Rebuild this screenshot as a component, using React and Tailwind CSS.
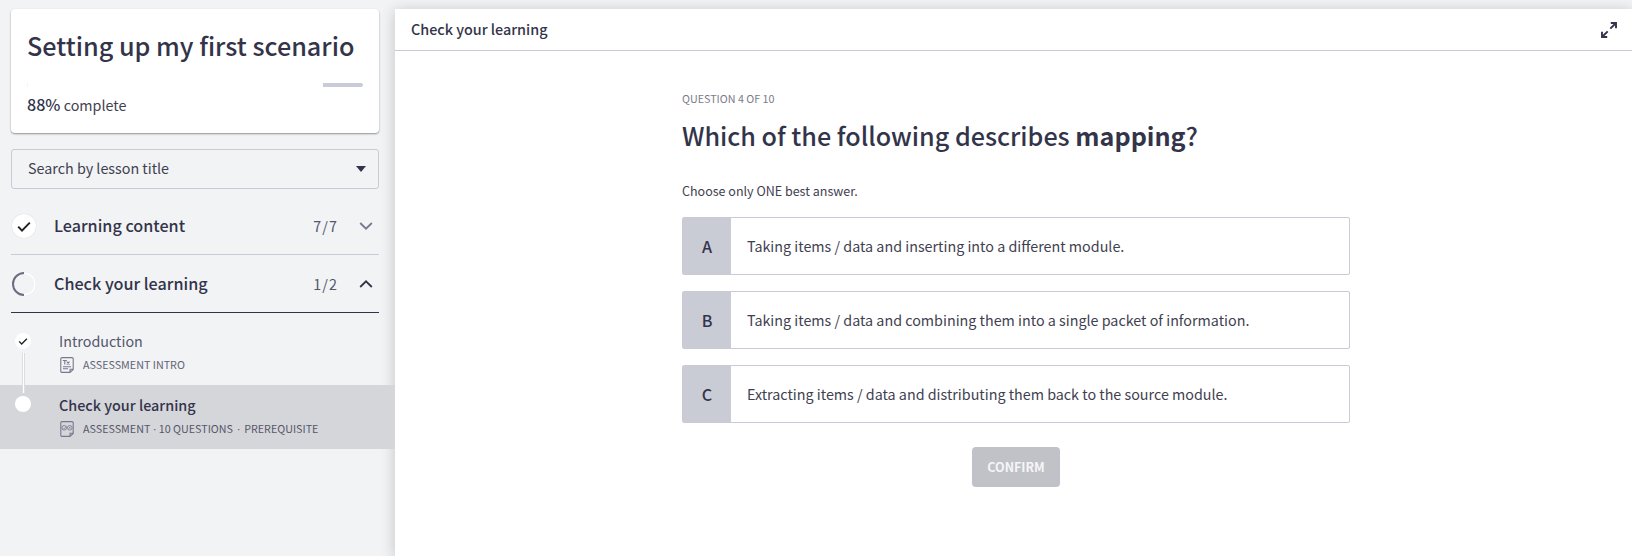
import React from "react";

function Check({ size, className }) {
  return (
    <svg width={size} height={size} viewBox="0 0 24 24" fill="none" stroke="currentColor" strokeWidth="2" className={className}>
      <path d="M6.2 12.6 10 16.6 17.8 8.6" />
    </svg>
  );
}

function Chevron({ up }) {
  return (
    <svg width="14" height="8" viewBox="0 0 14 8" fill="none" stroke={up ? "#33334b" : "#75788f"} strokeWidth="1.8">
      <path d={up ? "M1.2 7 7 1.3 12.8 7" : "M1.2 1 7 6.7 12.8 1"} />
    </svg>
  );
}

function PageIcon({ children }) {
  return (
    <svg width="14" height="16" viewBox="0 0 14 16" fill="none" stroke="#77788d" strokeWidth="1.1">
      <path d="M9.800 15.400H2A1.200 1.200 0 0 1 .8 14.200V1.800A1.200 1.200 0 0 1 2 .6H12A1.200 1.200 0 0 1 13.200 1.800V12.500L10 15.400V12.300H13.200" />
      {children}
    </svg>
  );
}

function Dot() {
  return <span className="font-['Open_Sans',sans-serif]"> · </span>;
}

function Section({ icon, title, count, up }) {
  return (
    <div className={`ml-[11px] mr-4 flex h-[58px] items-center border-b pl-px pr-[6px] ${up ? "border-[#33344c]" : "border-[#c9cad8]"}`}>
      {icon}
      <span className="-mt-0.5 ml-[18px] flex-1 text-[16.16px] font-medium leading-6">{title}</span>
      <span className="mr-[21px] text-[14.32px] leading-6 tracking-[1.1px] text-[#55566b]">{count}</span>
      <Chevron up={up} />
    </div>
  );
}

function Option({ letter, text }) {
  return (
    <div className="flex h-[58px] w-[668px] overflow-hidden rounded-[2px] border border-[#c9cad6]">
      <div className="flex w-12 items-center justify-center bg-[#c9cbd5] text-[16.1px] font-medium">{letter}</div>
      <div className="flex items-center pl-4 text-[14.32px] text-[#3f4150]">{text}</div>
    </div>
  );
}

export default function App() {
  return (
    <div className="flex h-[556px] w-full overflow-hidden bg-[#f1f3f5] font-['Noto_Sans_CJK_SC',sans-serif] text-[#33344a]">
      <aside className="w-[395px] shrink-0 pt-[9px]">
        <div className="ml-[11px] mr-4 h-[124px] rounded-[4px] bg-white px-4 pt-[20px] shadow-[0_1px_2px_rgba(0,0,0,0.4)]">
          <h1 className="h-8 whitespace-nowrap text-[25.2px] font-medium leading-8">Setting up my first scenario</h1>
          <div className="mt-[22px] flex h-1 justify-between">
            <div className="w-px bg-[#f4f4f6]" />
            <div className="w-10 rounded-r-[2px] bg-[#c9cbd7]" />
          </div>
          <p className="mt-[5px] text-[14.32px] leading-6 text-[#3f4150]">
            <span className="text-[16.1px] font-medium text-[#33344a]">88%</span> complete
          </p>
        </div>
        <div className="ml-[11px] mr-4 mt-4 flex h-10 items-center justify-between rounded-[3px] border border-[#c9cad6] pl-4 pr-3 text-[14.32px] text-[#3f4150]">
          <span className="-mt-0.5">Search by lesson title</span>
          <svg width="10" height="6" viewBox="0 0 10 6" fill="#33344c"><path d="M0 0h10L5 6z" /></svg>
        </div>
        <div className="h-2" />
        <Section
          title="Learning content"
          count="7/7"
          icon={<span className="flex size-6 items-center justify-center rounded-full bg-white shadow-[0_0_1px_rgba(0,0,0,0.2)]"><Check size={24} className="text-[#222]" /></span>}
        />
        <Section
          up
          title="Check your learning"
          count="1/2"
          icon={
            <svg width="24" height="24" viewBox="0 0 24 24" fill="none" strokeWidth="2">
              <circle cx="12" cy="12" r="11.500" stroke="#dcdde2" strokeWidth="1" />
              <circle cx="12" cy="12" r="11" stroke="#fff" strokeWidth="1.600" />
              <path d="M12 1a11 11 0 0 0 0 22" stroke="#6b6c83" />
            </svg>
          }
        />
        <div className="relative pt-2">
          <div className="absolute left-[22px] top-[40px] z-10 h-10 w-[3px] border-x border-[#dcdde1] bg-white" />
          <div className="flex h-16 pl-[15px] pt-2">
            <span className="mt-[4px] flex size-4 items-center justify-center rounded-full bg-white"><Check size={16} className="text-[#222]" /></span>
            <div className="ml-7">
              <div className="text-[14.32px] leading-6 text-[#55566b]">Introduction</div>
              <div className="flex h-6 items-center gap-[9px] pl-px text-[10.74px] text-[#626377]">
                <PageIcon>
                  <path d="M2.800 3.500h4M4.800 3.500v4M6.800 4.700l2.700 2.900M9.500 4.700 6.800 7.600M3 9.700h8M3 11.700h5" />
                </PageIcon>
                ASSESSMENT INTRO
              </div>
            </div>
          </div>
          <div className="flex h-16 bg-[#d5d6da] pl-[15px] pt-2">
            <span className="mt-[3px] size-4 rounded-full bg-white" />
            <div className="ml-7">
              <div className="text-[14.38px] font-medium leading-6">Check your learning</div>
              <div className="flex h-6 items-center gap-[9px] pl-px text-[10.74px] text-[#55566b]">
                <PageIcon>
                  <circle cx="4.200" cy="6.800" r="2.300" strokeWidth=".9" />
                  <circle cx="9.800" cy="6.800" r="2.300" strokeWidth=".9" />
                  <path d="m3.200 6.800 1 1 1.600-2M9 6l1.500 1.500M10.500 6 9 7.500" strokeWidth=".7" />
                </PageIcon>
                <span>ASSESSMENT<Dot />10 QUESTIONS<span className="mx-[1.4px]"><Dot /></span>PREREQUISITE</span>
              </div>
            </div>
          </div>
        </div>
      </aside>
      <main className="mt-[9px] flex flex-1 flex-col bg-white shadow-[0_2px_14px_rgba(0,0,0,0.2)]">
        <header className="flex h-[42px] items-center justify-between border-b border-[#c9cad6] pl-4 pr-[15px]">
          <h2 className="-mt-0.5 text-[14.36px] font-medium">Check your learning</h2>
          <svg width="16" height="16" viewBox="0 0 16 16" fill="none" stroke="#33344c" strokeWidth="1.900">
            <path d="M9.300 6.700 14.500 1.500M9.800 1h5.200v5.200M6.700 9.300 1.500 14.500M1 9.800v5.200h5.200" />
          </svg>
        </header>
        <div className="ml-[287px] w-[668px] pt-[38px]">
          <p className="h-5 text-[10.74px] leading-5 text-[#7a7b88]">QUESTION 4 OF 10</p>
          <h3 className="mt-[10px] h-8 whitespace-nowrap text-[25.15px] font-medium leading-8">
            Which of the following describes <b className="font-bold">mapping</b>?
          </h3>
          <p className="mt-[30px] h-5 text-[12.53px] leading-5 text-[#3f4150]">Choose only ONE best answer.</p>
          <div className="mt-4 flex flex-col gap-4">
            <Option letter="A" text="Taking items / data and inserting into a different module." />
            <Option letter="B" text="Taking items / data and combining them into a single packet of information." />
            <Option letter="C" text="Extracting items / data and distributing them back to the source module." />
          </div>
          <div className="mt-6 flex pl-[290px]">
            <button className="h-10 w-[88px] rounded-[4px] bg-[#c1c2c8] text-[12.53px] font-bold text-[#f5f5f7]">CONFIRM</button>
          </div>
        </div>
      </main>
    </div>
  );
}
